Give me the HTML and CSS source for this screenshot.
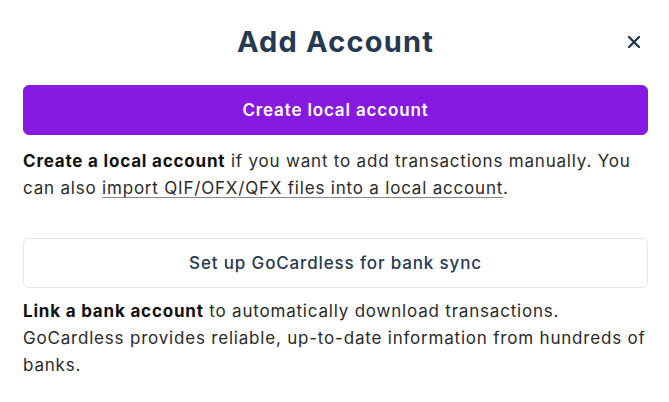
FILE: index.html
```html
<!DOCTYPE html>
<html>
<head>
<meta charset="utf-8">
<link rel="stylesheet" href="styles.css">
</head>
<body>
<div class="modal">
  <div class="header">
    <h1 class="title">Add Account</h1>
    <button class="close" aria-label="Close">
      <svg width="12" height="12" viewBox="0 0 12 12"><path d="M1 1L11 11M11 1L1 11" stroke="#1f3550" stroke-width="2.3" stroke-linecap="round"/></svg>
    </button>
  </div>
  <div class="section">
    <button class="btn btn-primary">Create local account</button>
    <p class="desc"><strong>Create a local account</strong> if you want to add transactions manually. You can also <a class="link" href="#">import QIF/OFX/QFX files into a local account</a>.</p>
  </div>
  <div class="section second">
    <button class="btn btn-normal">Set up GoCardless for bank sync</button>
    <p class="desc desc-tight"><strong>Link a bank account</strong> to automatically download transactions. GoCardless provides reliable, up-to-date information from hundreds of banks.</p>
  </div>
</div>
</body>
</html>
```
FILE: styles.css
```css
* { box-sizing: border-box; }
html, body { margin: 0; padding: 0; background: #ffffff; }
body { font-family: Inter, "Noto Sans", sans-serif; color: #1b1b1b; }
.modal { width: 669px; padding: 19px 21px 0 23px; }
.header { position: relative; display: flex; justify-content: center; align-items: center; height: 44px; margin-bottom: 22px; }
.title { margin: 0; font-size: 29px; font-weight: 700; color: #253a52; letter-spacing: 1.2px; }
.close { position: absolute; right: 8px; top: 17px; border: 0; background: none; padding: 0; width: 12px; height: 12px; display: flex; }
.section { display: flex; flex-direction: column; }
.second { margin-top: 36px; }
.btn { width: 100%; height: 50px; border-radius: 6px; font-family: Inter, sans-serif; font-size: 17px; letter-spacing: 0.85px; cursor: pointer; }
.btn-primary { background: #8719e0; border: 1px solid #8719e0; color: #ffffff; font-weight: 600; }
.btn-normal { background: #ffffff; border: 1px solid #e2e7ef; color: #253a52; font-weight: 500; }
.desc { margin: 13px 0 0; font-size: 17px; line-height: 27px; letter-spacing: 0.8px; color: #2a2a2a; }
.desc-tight { margin-top: 10px; }
.desc strong { color: #111; font-weight: 700; }
.link { color: #2a2a2a; text-decoration: underline; text-decoration-color: #888; text-underline-offset: 3px; }
```
